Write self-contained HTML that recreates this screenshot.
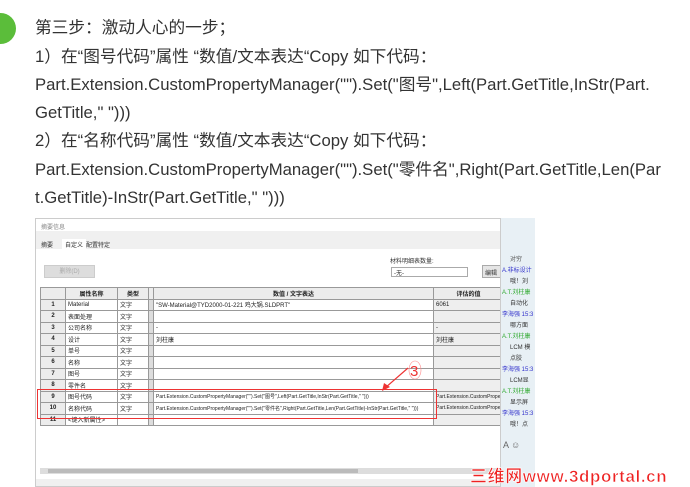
<!DOCTYPE html>
<html><head><meta charset="utf-8"><style>
*{margin:0;padding:0;box-sizing:border-box}
body{width:690px;height:487px;background:#fff;position:relative;overflow:hidden;font-family:"Liberation Sans","Noto Sans CJK SC",sans-serif}
.t{position:absolute;left:35px;font-size:16.7px;color:#333;white-space:nowrap;line-height:28px}
.a{position:absolute;white-space:nowrap}
.s{font-size:6px;color:#333}
table{border-collapse:collapse;position:absolute;left:40px;top:287px;font-size:6px;color:#222}
td{border:1px solid #999;height:11.5px;padding:0 2px;white-space:nowrap;overflow:hidden;background:#fff}
td.n{background:#ececec;font-weight:bold;text-align:center;width:25px}
tr.h td{background:#ececec;font-weight:bold;text-align:center}
td.d{width:5px;background:#ddd;padding:0}
</style></head><body>
<div style="position:absolute;left:-15px;top:13px;width:31px;height:31px;border-radius:50%;background:#5bbd3a"></div>
<div class="t" style="top:14px">第三步：激动人心的一步；</div>
<div class="t" style="top:43px">1）在“图号代码”属性 “数值/文本表达“Copy 如下代码：</div>
<div class="t" style="top:71px">Part.Extension.CustomPropertyManager("").Set("图号",Left(Part.GetTitle,InStr(Part.</div>
<div class="t" style="top:99px">GetTitle," ")))</div>
<div class="t" style="top:127px">2）在“名称代码”属性 “数值/文本表达“Copy 如下代码：</div>
<div class="t" style="top:156px">Part.Extension.CustomPropertyManager("").Set("零件名",Right(Part.GetTitle,Len(Par</div>
<div class="t" style="top:184px">t.GetTitle)-InStr(Part.GetTitle," ")))</div>

<div style="position:absolute;left:35px;top:218px;width:500px;height:269px;background:#f0f0f0;border:1px solid #ccc"></div>
<div style="position:absolute;left:36px;top:219px;width:465px;height:12px;background:#fff"></div>
<div class="a s" style="left:41px;top:222px;color:#888">摘要信息</div>
<div class="a s" style="left:41px;top:240px">摘要</div>
<div class="a s" style="left:62px;top:239px;background:#fff;padding:1px 3px">自定义</div>
<div class="a s" style="left:86px;top:240px">配置特定</div>
<div style="position:absolute;left:36px;top:249px;width:465px;height:230px;background:#fff"></div>
<div class="a s" style="left:44px;top:265px;width:51px;height:13px;background:#ddd;border:1px solid #ccc;color:#aaa;text-align:center;line-height:12px">删除(D)</div>
<div class="a s" style="left:390px;top:256px">材料明细表数量:</div>
<div class="a s" style="left:391px;top:267px;width:77px;height:10px;border:1px solid #aaa;padding-left:2px">-无-</div>
<div class="a s" style="left:482px;top:265px;width:20px;height:13px;background:#e5e5e5;border:1px solid #aaa;padding:2px">编辑</div>
<table>
<tr class="h"><td class="n"></td><td style="width:52px">属性名称</td><td style="width:31px">类型</td><td class="d"></td><td style="width:280px">数值 / 文字表达</td><td style="width:70px">评估的值</td></tr>
<tr><td class="n">1</td><td>Material</td><td>文字</td><td class="d"></td><td>"SW-Material@TYD2000-01-221 鸡大锅.SLDPRT"</td><td style="background:#eee">6061</td></tr>
<tr><td class="n">2</td><td>表面处理</td><td>文字</td><td class="d"></td><td></td><td style="background:#eee"></td></tr>
<tr><td class="n">3</td><td>公司名称</td><td>文字</td><td class="d"></td><td>-</td><td style="background:#eee">-</td></tr>
<tr><td class="n">4</td><td>设计</td><td>文字</td><td class="d"></td><td>刘柱康</td><td style="background:#eee">刘柱康</td></tr>
<tr><td class="n">5</td><td>单号</td><td>文字</td><td class="d"></td><td></td><td style="background:#eee"></td></tr>
<tr><td class="n">6</td><td>名称</td><td>文字</td><td class="d"></td><td></td><td style="background:#eee"></td></tr>
<tr><td class="n">7</td><td>图号</td><td>文字</td><td class="d"></td><td></td><td style="background:#eee"></td></tr>
<tr><td class="n">8</td><td>零件名</td><td>文字</td><td class="d"></td><td></td><td style="background:#eee"></td></tr>
<tr><td class="n">9</td><td>图号代码</td><td>文字</td><td class="d"></td><td style="font-size:5px">Part.Extension.CustomPropertyManager("").Set("图号",Left(Part.GetTitle,InStr(Part.GetTitle," ")))</td><td style="background:#eee;font-size:5px">Part.Extension.CustomPrope</td></tr>
<tr><td class="n">10</td><td>名称代码</td><td>文字</td><td class="d"></td><td style="font-size:5px">Part.Extension.CustomPropertyManager("").Set("零件名",Right(Part.GetTitle,Len(Part.GetTitle)-InStr(Part.GetTitle," ")))</td><td style="background:#eee;font-size:5px">Part.Extension.CustomPrope</td></tr>
<tr><td class="n">11</td><td>&lt;键入新属性&gt;</td><td></td><td class="d"></td><td></td><td style="background:#eee"></td></tr>
</table>
<div style="position:absolute;left:37px;top:389px;width:400px;height:30px;border:1px solid #e33"></div>
<svg style="position:absolute;left:370px;top:358px" width="60" height="40"><line x1="38" y1="10" x2="15" y2="30" stroke="#e33" stroke-width="1.2"/><polygon points="12,33 14,25 20,29" fill="#e33"/><ellipse cx="45" cy="12" rx="6" ry="9" fill="none" stroke="#f88" stroke-width=".6"/><text x="40" y="18" font-size="15" fill="#e33" font-family="Liberation Sans">3</text></svg>
<div style="position:absolute;left:40px;top:468px;width:460px;height:6px;background:#ddd"></div>
<div style="position:absolute;left:48px;top:469px;width:310px;height:4px;background:#bbb"></div>
<div style="position:absolute;left:500px;top:218px;width:35px;height:269px;background:#e8f0f5;border-left:1px solid #ccc"></div>
<div class="a" style="left:502px;top:255px;font-size:6px;line-height:11px;color:#333">
<div style="color:#555;padding-left:8px">对穷</div><div style="color:#33c">A.非标设计</div><div style="padding-left:8px">哦！刘</div><div style="color:#3a3">A.T.刘柱康</div><div style="padding-left:8px">自动化</div><div style="color:#33c">李海强 15:3</div><div style="padding-left:8px">哪方面</div><div style="color:#3a3">A.T.刘柱康</div><div style="padding-left:8px">LCM 模</div><div style="padding-left:8px">点胶</div><div style="color:#33c">李海强 15:3</div><div style="padding-left:8px">LCM显</div><div style="color:#3a3">A.T.刘柱康</div><div style="padding-left:8px">显示屏</div><div style="color:#33c">李海强 15:3</div><div style="padding-left:8px">哦！点</div></div>
<div class="a" style="left:503px;top:440px;font-size:9px;color:#666">A ☺</div>
<div class="a" style="left:470px;top:462px;font-size:17px;letter-spacing:0.6px;font-weight:bold;color:#e22;-webkit-text-stroke:0.6px #fff;text-shadow:0 0 1px #fff,0 0 1px #fff">三维网www.3dportal.cn</div>
</body></html>
